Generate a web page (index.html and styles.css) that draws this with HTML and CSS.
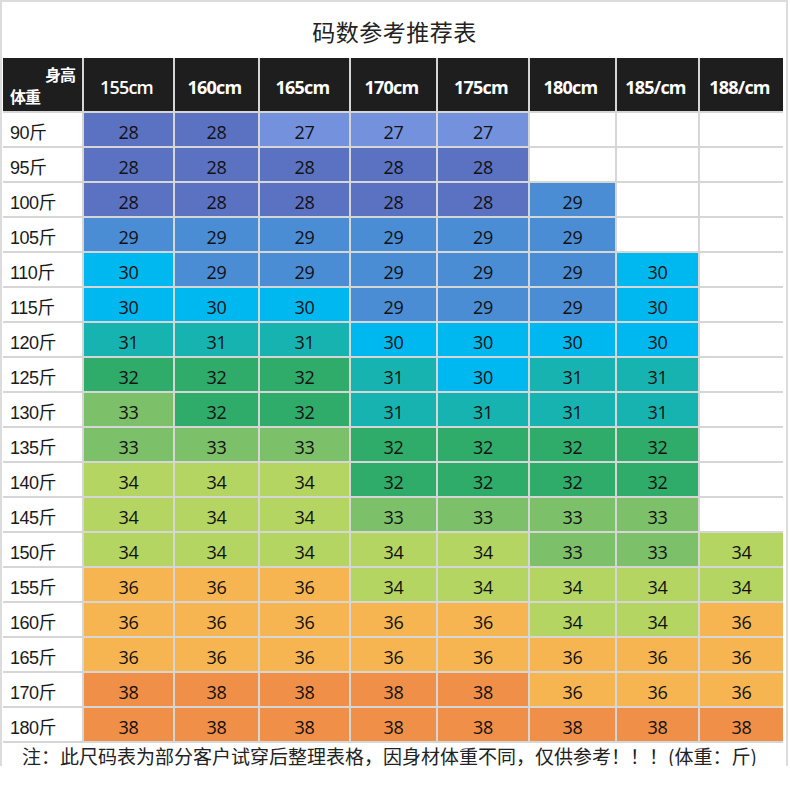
FILE: index.html
```html
<!DOCTYPE html>
<html lang="zh-CN">
<head>
<meta charset="utf-8">
<title>码数参考推荐表</title>
<link rel="stylesheet" href="styles.css">
</head>
<body>
<div class="frame">
  <h1 class="title">码数参考推荐表</h1>
  <div class="grid">
    <div class="hd corner"><span class="h-top">身高</span><span class="h-bot">体重</span></div>
    <div class="hd thin">155cm</div>
    <div class="hd">160cm</div>
    <div class="hd">165cm</div>
    <div class="hd">170cm</div>
    <div class="hd">175cm</div>
    <div class="hd">180cm</div>
    <div class="hd">185/cm</div>
    <div class="hd">188/cm</div>

    <div class="lb">90斤</div><div class="c c28">28</div><div class="c c28">28</div><div class="c c27">27</div><div class="c c27">27</div><div class="c c27">27</div><div class="c"></div><div class="c"></div><div class="c"></div>
    <div class="lb">95斤</div><div class="c c28">28</div><div class="c c28">28</div><div class="c c28">28</div><div class="c c28">28</div><div class="c c28">28</div><div class="c"></div><div class="c"></div><div class="c"></div>
    <div class="lb">100斤</div><div class="c c28">28</div><div class="c c28">28</div><div class="c c28">28</div><div class="c c28">28</div><div class="c c28">28</div><div class="c c29">29</div><div class="c"></div><div class="c"></div>
    <div class="lb">105斤</div><div class="c c29">29</div><div class="c c29">29</div><div class="c c29">29</div><div class="c c29">29</div><div class="c c29">29</div><div class="c c29">29</div><div class="c"></div><div class="c"></div>
    <div class="lb">110斤</div><div class="c c30">30</div><div class="c c29">29</div><div class="c c29">29</div><div class="c c29">29</div><div class="c c29">29</div><div class="c c29">29</div><div class="c c30">30</div><div class="c"></div>
    <div class="lb">115斤</div><div class="c c30">30</div><div class="c c30">30</div><div class="c c30">30</div><div class="c c29">29</div><div class="c c29">29</div><div class="c c29">29</div><div class="c c30">30</div><div class="c"></div>
    <div class="lb">120斤</div><div class="c c31">31</div><div class="c c31">31</div><div class="c c31">31</div><div class="c c30">30</div><div class="c c30">30</div><div class="c c30">30</div><div class="c c30">30</div><div class="c"></div>
    <div class="lb">125斤</div><div class="c c32">32</div><div class="c c32">32</div><div class="c c32">32</div><div class="c c31">31</div><div class="c c30">30</div><div class="c c31">31</div><div class="c c31">31</div><div class="c"></div>
    <div class="lb">130斤</div><div class="c c33">33</div><div class="c c32">32</div><div class="c c32">32</div><div class="c c31">31</div><div class="c c31">31</div><div class="c c31">31</div><div class="c c31">31</div><div class="c"></div>
    <div class="lb">135斤</div><div class="c c33">33</div><div class="c c33">33</div><div class="c c33">33</div><div class="c c32">32</div><div class="c c32">32</div><div class="c c32">32</div><div class="c c32">32</div><div class="c"></div>
    <div class="lb">140斤</div><div class="c c34">34</div><div class="c c34">34</div><div class="c c34">34</div><div class="c c32">32</div><div class="c c32">32</div><div class="c c32">32</div><div class="c c32">32</div><div class="c"></div>
    <div class="lb">145斤</div><div class="c c34">34</div><div class="c c34">34</div><div class="c c34">34</div><div class="c c33">33</div><div class="c c33">33</div><div class="c c33">33</div><div class="c c33">33</div><div class="c"></div>
    <div class="lb">150斤</div><div class="c c34">34</div><div class="c c34">34</div><div class="c c34">34</div><div class="c c34">34</div><div class="c c34">34</div><div class="c c33">33</div><div class="c c33">33</div><div class="c c34">34</div>
    <div class="lb">155斤</div><div class="c c36">36</div><div class="c c36">36</div><div class="c c36">36</div><div class="c c34">34</div><div class="c c34">34</div><div class="c c34">34</div><div class="c c34">34</div><div class="c c34">34</div>
    <div class="lb">160斤</div><div class="c c36">36</div><div class="c c36">36</div><div class="c c36">36</div><div class="c c36">36</div><div class="c c36">36</div><div class="c c34">34</div><div class="c c34">34</div><div class="c c36">36</div>
    <div class="lb">165斤</div><div class="c c36">36</div><div class="c c36">36</div><div class="c c36">36</div><div class="c c36">36</div><div class="c c36">36</div><div class="c c36">36</div><div class="c c36">36</div><div class="c c36">36</div>
    <div class="lb">170斤</div><div class="c c38">38</div><div class="c c38">38</div><div class="c c38">38</div><div class="c c38">38</div><div class="c c38">38</div><div class="c c36">36</div><div class="c c36">36</div><div class="c c36">36</div>
    <div class="lb">180斤</div><div class="c c38">38</div><div class="c c38">38</div><div class="c c38">38</div><div class="c c38">38</div><div class="c c38">38</div><div class="c c38">38</div><div class="c c38">38</div><div class="c c38">38</div>
  </div>
  <p class="note">注：此尺码表为部分客户试穿后整理表格，因身材体重不同，仅供参考！！！(体重：斤)</p>
</div>
</body>
</html>
```

FILE: styles.css
```css
* { box-sizing: border-box; }
html, body { margin: 0; padding: 0; background: #fff; }
body { font-family: "Open Sans", "Noto Sans CJK SC", sans-serif; color: #1a1a1a; }

.frame {
  width: 788px;
  height: 766px;
  border: 2px solid #dcdcdc;
  border-bottom: none;
  padding: 0 0 0 1px;
  background: #fff;
}

.title {
  margin: 0;
  height: 56px;
  display: flex;
  align-items: center;
  justify-content: center;
  font-family: "Noto Sans CJK SC", sans-serif;
  font-weight: 400;
  font-size: 23px;
  color: #222;
  padding-top: 2px;
  letter-spacing: 0.5px;
}

.grid {
  display: grid;
  grid-template-columns: 79px 89px 83px 89px 85px 90px 85px 81px 83px;
  grid-template-rows: 53px repeat(18, 33px);
  gap: 2px;
  background: #d6d6d6;
  width: 780px;
  border-bottom: 2px solid #d6d6d6;
}

.hd {
  background: #1e1e1e;
  color: #fff;
  font-family: "Open Sans", "Noto Sans CJK SC", sans-serif;
  font-weight: 700;
  font-size: 18px;
  display: flex;
  align-items: center;
  justify-content: center;
  padding: 4px 4px 0 0;
  letter-spacing: -0.8px;
}
.hd.thin { font-weight: 600; }

.corner {
  display: flex;
  flex-direction: column;
  align-items: stretch;
  justify-content: center;
  padding: 3px 7px 2px 7px;
  font-family: "Noto Sans CJK SC", sans-serif;
  font-size: 16px;
  font-weight: 700;
  line-height: 22px;
  letter-spacing: -1px;
}
.h-top { text-align: right; }
.h-bot { text-align: left; }

.lb {
  background: #fff;
  display: flex;
  align-items: center;
  padding: 3px 0 0 7px;
  font-family: "Liberation Sans", "Noto Sans CJK SC", sans-serif;
  font-size: 18px;
  color: #1a1a1a;
  letter-spacing: -0.5px;
}

.c {
  background: #fff;
  display: flex;
  align-items: center;
  justify-content: center;
  padding-top: 4px;
  font-family: "Open Sans", "Noto Sans CJK SC", sans-serif;
  font-size: 18px;
  color: #111;
  letter-spacing: -0.3px;
}

.c27 { background: #7391dc; }
.c28 { background: #5b71c2; }
.c29 { background: #4a8dd4; }
.c30 { background: #00b8f0; }
.c31 { background: #17b3b0; }
.c32 { background: #2fab6a; }
.c33 { background: #7dc06a; }
.c34 { background: #b5d562; }
.c36 { background: #f6b551; }
.c38 { background: #f08f48; }

.note {
  margin: 0;
  height: 24px;
  padding: 0 0 0 19px;
  display: flex;
  align-items: center;
  font-family: "Noto Sans CJK SC", sans-serif;
  font-size: 19px;
  line-height: 1;
  color: #222;
  white-space: nowrap;
}
```
